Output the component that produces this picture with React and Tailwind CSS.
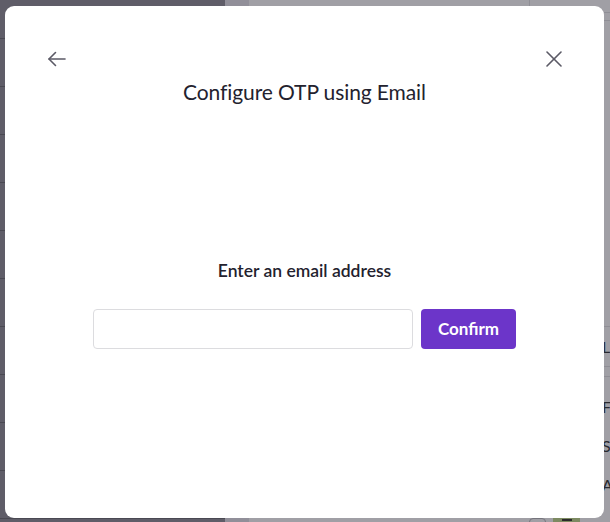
import React from "react";

function ArrowLeft() {
  return (
    <svg width="20" height="20" viewBox="0 0 20 20" fill="none" stroke="#5b5a66" strokeWidth="1.6" strokeLinecap="round" strokeLinejoin="round">
      <path d="M18 10H2" />
      <path d="M8.5 3.5L2 10l6.5 6.5" />
    </svg>
  );
}

function CloseIcon() {
  return (
    <svg width="16" height="16" viewBox="0 0 16 16" fill="none" stroke="#5b5a66" strokeWidth="1.6" strokeLinecap="round">
      <path d="M1 1l14 14" />
      <path d="M15 1L1 15" />
    </svg>
  );
}

export default function App() {
  const rows = Array.from({ length: 11 });
  return (
    <div className="relative w-[610px] h-[522px] overflow-hidden" style={{ fontFamily: "Lato, 'Noto Sans', sans-serif" }}>
      {/* dimmed page behind */}
      <div className="flex h-full w-full">
        <div className="w-[225px] h-full bg-[#5f5d68] flex flex-col pt-[38px]">
          {rows.map((_, i) => (
            <div key={i} className="h-[48px] shrink-0 border-t border-[#4a4952]" />
          ))}
        </div>
        <div className="w-[24px] h-full bg-[#918f99]" />
        <div className="flex-1 h-full bg-[#a09fa5] flex flex-col">
          <div className="h-[6px] flex">
            <div className="w-[281px] border-r border-[#8f8e95]" />
          </div>
          <div className="flex-1 flex justify-end">
            <div className="w-[6px] flex flex-col text-[16px] text-[#2a2a30] leading-none">
              <div className="h-[7px] border-b border-[#8f8e95]" />
              <div className="h-[8px] border-b border-[#8f8e95]" />
              <div className="h-[306px] border-b border-[#8f8e95]" />
              <div className="h-[40px] border-b border-[#8f8e95] flex items-center overflow-hidden"><span className="-ml-[2px]">L</span></div>
              <div className="h-[10px] border-b border-[#8f8e95]" />
              <div className="h-[40px] mt-[10px] flex items-center overflow-hidden"><span className="-ml-[2px]">F</span></div>
              <div className="h-[38px] flex items-center overflow-hidden"><span className="-ml-[2px]">S</span></div>
              <div className="h-[40px] flex items-center overflow-hidden"><span className="-ml-[2px]">A</span></div>
            </div>
          </div>
        </div>
      </div>
      {/* bottom bits */}
      <div className="absolute left-[529px] top-[518px] w-[17px] h-[10px] rounded-[4px] border border-[#76757d]" />
      <div className="absolute left-[553px] top-[518px] w-[27px] h-[4px] bg-[#7d8a62] flex justify-center">
        <div className="w-[10px] h-[2px] mt-[1px] bg-[#2b2b2b]" />
      </div>

      {/* modal */}
      <div className="absolute left-[5px] top-[6px] w-[599px] h-[512px] bg-white rounded-[9px] flex flex-col">
        <div className="flex items-start justify-between pt-[42px] px-[38px]">
          <button className="w-[30px] h-[20px] flex items-center justify-center -ml-[1px] mt-[1px]">
            <ArrowLeft />
          </button>
          <button className="w-[20px] h-[20px] flex items-center justify-center mr-[2px] mt-[1px]">
            <CloseIcon />
          </button>
        </div>
        <h2 className="text-center text-[21px] leading-[28px] text-[#23222e] mt-[9px] tracking-[-0.1px]">
          Configure OTP using Email
        </h2>
        <div className="flex flex-col items-center mt-[155px]">
          <p className="text-[17.5px] leading-[20px] font-semibold text-[#23222e]">Enter an email address</p>
          <div className="flex gap-[8px] mt-[28px]">
            <input className="w-[320px] h-[40px] rounded-[4px] border border-[#dcdcdf] outline-none px-3" />
            <button className="w-[95px] h-[40px] rounded-[4px] bg-[#6c35c9] text-white font-bold text-[17px]">
              Confirm
            </button>
          </div>
        </div>
      </div>
    </div>
  );
}
